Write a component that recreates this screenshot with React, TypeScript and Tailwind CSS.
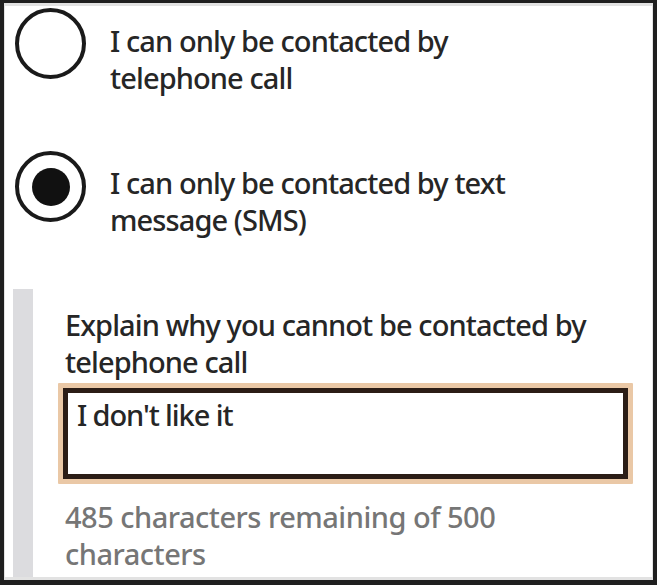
export default function App() {
  const font = { fontFamily: '"Noto Sans", "Open Sans", sans-serif' };
  return (
    <div className="w-[657px] h-[585px] bg-[#1f1f1f] pt-[3px] pl-[4px] pr-[4px] pb-[5px]" style={font}>
      <div className="h-full flex flex-col bg-white border-t-[3px] border-x border-b-[3px] border-[#e2e2e2] text-[#262626] text-[29px] leading-[37px] font-medium">
        {/* radio 1 */}
        <div className="flex items-start pl-[10px]">
          <span className="mt-[2px] w-[71px] h-[71px] shrink-0 rounded-full border-[4px] border-[#1a1a1a]" />
          <p className="ml-[24px] mt-[16px] tracking-[-0.9px]">
            I can only be contacted by
            <br />
            telephone call
          </p>
        </div>
        {/* radio 2 */}
        <div className="flex items-start pl-[10px] mt-[53px]">
          <span className="mt-[2px] w-[71px] h-[71px] shrink-0 rounded-full border-[4px] border-[#1a1a1a] flex items-center justify-center">
            <span className="w-[38px] h-[38px] rounded-full bg-[#111]" />
          </span>
          <p className="ml-[24px] mt-[15px] tracking-[-0.9px]">
            I can only be contacted by text
            <br />
            message (SMS)
          </p>
        </div>
        {/* conditional */}
        <div className="flex flex-1 mt-[51px] ml-[8px]">
          <div className="w-[20px] shrink-0 bg-[#dcdcdf]" />
          <div className="pl-[25px] pr-[19px] flex-1">
            <label className="block pt-[17px] pl-[7px] tracking-[-0.9px]">
              Explain why you cannot be contacted by
              <br />
              telephone call
            </label>
            <div className="mt-[3px] border-[5px] border-[#eac8a6] rounded-[1px]">
              <div className="h-[91px] border-[5px] border-[#2b1d16] px-[9px] pt-[3px] tracking-[-1.1px]">
                I don't like it
              </div>
            </div>
            <p className="mt-[14px] pl-[7px] text-[#767676] tracking-[-0.5px]">
              485 characters remaining of 500
              <br />
              characters
            </p>
          </div>
        </div>
      </div>
    </div>
  );
}
